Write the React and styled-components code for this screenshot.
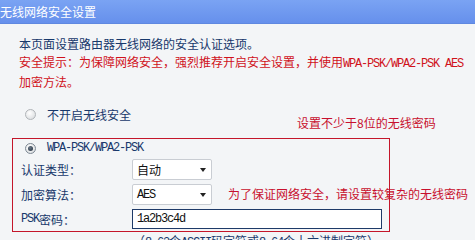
import React from 'react';
import styled, { createGlobalStyle } from 'styled-components';

const GlobalStyle = createGlobalStyle`
  body {
    margin: 0;
    background: #f3f5f7;
    font-family: "Noto Sans CJK SC", "Noto Sans", sans-serif;
    font-size: 12px;
  }
`

const Page = styled.div`
  position: relative;
  width: 475px;
  height: 240px;
  overflow: hidden;
`

const Header = styled.div`
  height: 24px;
  line-height: 24px;
  background: linear-gradient(#7aa3f3, #6690ec);
  border-bottom: 1px solid #5f88e0;
  box-sizing: border-box;
  color: #fff;
  font-size: 12px;
  white-space: nowrap;
`

const Content = styled.div`
  padding-left: 12px;
`

const Intro = styled.p`
  margin: 11px 0 0;
  padding-left: 7px;
  line-height: 18px;
  white-space: nowrap;
  color: ${p => (p.$warn ? '#d0121b' : '#17386b')};
  & + & {
    margin-top: 0;
  }
`

const Mono = styled.span`
  font-family: "Liberation Mono", monospace;
  font-size: 12px;
  letter-spacing: -1.2px;
`

const RadioRow = styled.div`
  display: flex;
  align-items: center;
  height: 18px;
  padding-left: ${p => p.$indent}px;
  margin-top: ${p => p.$top || 0}px;
  color: #17386b;
`

const Radio = styled.span`
  position: relative;
  width: 11px;
  height: 11px;
  box-sizing: border-box;
  border-radius: 50%;
  border: 1px solid ${p => (p.$checked ? '#7d8894' : '#b0b4b8')};
  background: radial-gradient(circle at 40% 35%, #ffffff, #d4d7da);
  margin-right: 11px;
  &::after {
    content: '';
    display: ${p => (p.$checked ? 'block' : 'none')};
    position: absolute;
    left: 2px;
    top: 2px;
    width: 5px;
    height: 5px;
    border-radius: 50%;
    background: radial-gradient(circle at 40% 35%, #6a7888, #1e2a38);
  }
`

const Box = styled.div`
  position: relative;
  margin-top: 15px;
  width: 378px;
  box-sizing: border-box;
  border: 1px solid #c4162a;
  padding-bottom: 2px;
`

const Form = styled.div`
  display: grid;
  grid-template-columns: 119px 1fr;
  row-gap: 4px;
  margin-top: 2px;
`

const Label = styled.div`
  display: flex;
  align-items: center;
  padding-left: 8px;
  color: #17386b;
`

const Select = styled.div`
  position: relative;
  display: flex;
  align-items: center;
  width: 80px;
  height: 21px;
  box-sizing: border-box;
  padding-left: 4px;
  background: #fff;
  border: 1px solid #c9cdd3;
  border-radius: 2px;
  color: #111;
  &::after {
    content: '';
    position: absolute;
    right: 5px;
    top: 8px;
    border-left: 3.5px solid transparent;
    border-right: 3.5px solid transparent;
    border-top: 4px solid #222;
  }
`

const TextInput = styled.div`
  display: flex;
  align-items: center;
  width: 250px;
  height: 20px;
  box-sizing: border-box;
  padding-left: 4px;
  background: #fff;
  border: 1px solid #1e3a68;
  color: #111;
`

const Note = styled.div`
  padding-left: 121px;
  line-height: 18px;
  color: #17386b;
  white-space: nowrap;
`

const Remark = styled.div`
  position: absolute;
  left: ${p => p.$x}px;
  top: ${p => p.$y}px;
  line-height: 18px;
  color: #c8102e;
  white-space: nowrap;
`

export default function App() {
  return (
    <Page>
      <GlobalStyle />
      <Header>无线网络安全设置</Header>
      <Remark $x={297} $y={114}>设置不少于8位的无线密码</Remark>
      <Remark $x={228} $y={185}>为了保证网络安全，请设置较复杂的无线密码</Remark>
      <Content>
        <Intro>本页面设置路由器无线网络的安全认证选项。</Intro>
        <Intro $warn>
          安全提示：为保障网络安全，强烈推荐开启安全设置，并使用<Mono>WPA-PSK/WPA2-PSK AES</Mono>
          <br />
          加密方法。
        </Intro>
        <RadioRow $indent={13} $top={14}>
          <Radio />
          不开启无线安全
        </RadioRow>
        <Box>
          <RadioRow $indent={12}>
            <Radio $checked />
            <Mono>WPA-PSK/WPA2-PSK</Mono>
          </RadioRow>
          <Form>
            <Label>认证类型：</Label>
            <Select>自动</Select>
            <Label>加密算法：</Label>
            <Select><Mono>AES</Mono></Select>
            <Label><Mono>PSK</Mono>密码：</Label>
            <TextInput><Mono>1a2b3c4d</Mono></TextInput>
          </Form>
        </Box>
        <Note>（<Mono>8-63</Mono>个<Mono>ASCII</Mono>码字符或<Mono>8-64</Mono>个十六进制字符）</Note>
      </Content>
    </Page>
  );
}
